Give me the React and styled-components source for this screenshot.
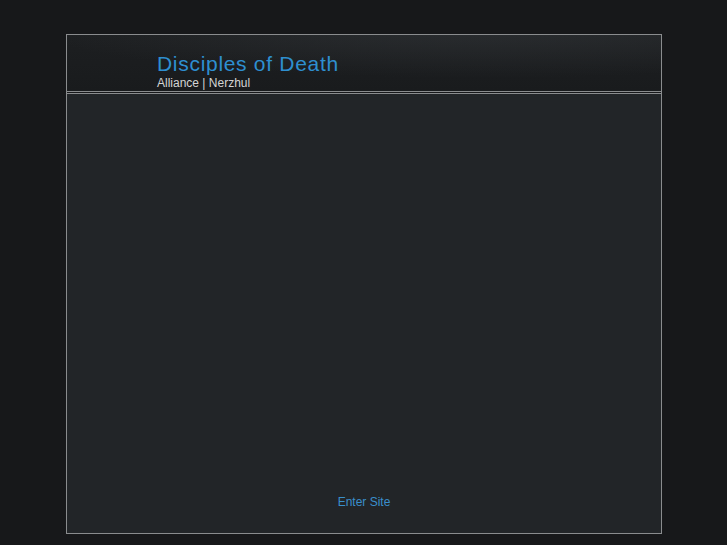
import React from 'react';
import styled, { createGlobalStyle } from 'styled-components';

const GlobalStyle = createGlobalStyle`
  html, body {
    margin: 0;
    padding: 0;
    background: #17181a;
    font-family: "Liberation Sans", Arial, sans-serif;
  }
`;

const Page = styled.div`
  padding-top: 34px;
  padding-left: 66px;
`;

const Frame = styled.div`
  width: 594px;
  height: 498px;
  border: 1px solid #8a8c8e;
  display: flex;
  flex-direction: column;
  background: #17181a;
`;

const Header = styled.div`
  box-sizing: border-box;
  height: 57px;
  border-bottom: 1px solid #8a8c8e;
  padding: 18px 0 0 90px;
  background:
    radial-gradient(ellipse 460px 55px at 70% -12px, rgba(58, 62, 66, 0.5), rgba(40, 43, 46, 0) 100%),
    linear-gradient(#1d1f21, #191b1d);
`;

const Title = styled.h1`
  margin: 0;
  font-size: 21px;
  line-height: 21px;
  font-weight: normal;
  letter-spacing: 0.7px;
  color: #2e8fd0;
`;

const Subtitle = styled.div`
  margin-top: 2px;
  font-size: 12px;
  line-height: 14px;
  color: #d4d4d4;
`;

const Content = styled.div`
  flex: 1;
  margin-top: 1px;
  border-top: 1px solid #8a8c8e;
  background: #222528;
  display: flex;
  flex-direction: column;
  justify-content: flex-end;
  align-items: center;
  padding-bottom: 24px;
`;

const EnterLink = styled.a`
  font-size: 12px;
  line-height: 14px;
  color: #3a8fcb;
  text-decoration: none;
  cursor: pointer;
`;

export default function App() {
  return (
    <>
      <GlobalStyle />
      <Page>
        <Frame>
          <Header>
            <Title>Disciples of Death</Title>
            <Subtitle>Alliance | Nerzhul</Subtitle>
          </Header>
          <Content>
            <EnterLink href="#">Enter Site</EnterLink>
          </Content>
        </Frame>
      </Page>
    </>
  );
}
